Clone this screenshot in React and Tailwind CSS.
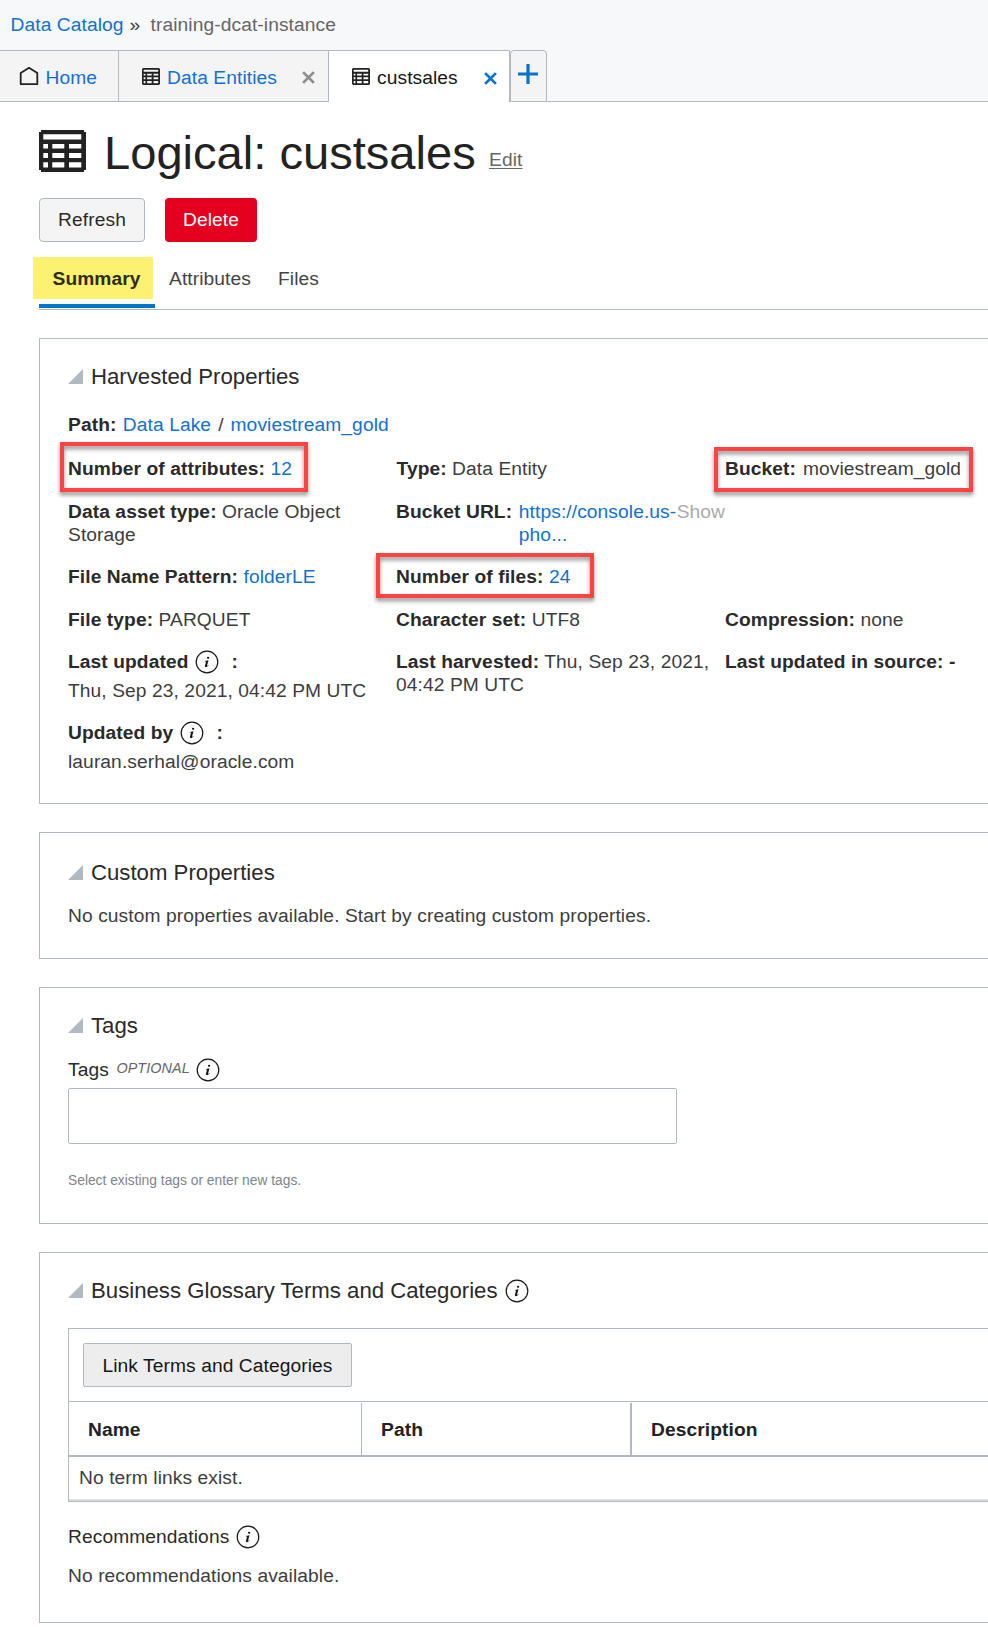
import React from "react";

function TableIcon({ className }) {
  return (
    <svg viewBox="0 0 47 42" className={className} preserveAspectRatio="none" fill="#222">
      <path
        fillRule="evenodd"
        d="M2 0H45V2H47V40H45V42H2V40H0V2H2ZM4.3 4.2V9.4H42.3V4.2ZM4.3 14V18.5H9V14ZM13.3 14V18.5H25.3V14ZM30 14V18.5H42.3V14ZM4.3 23V28H9V23ZM13.3 23V28H25.3V23ZM30 23V28H42.3V23ZM4.3 32.3V37.6H9V32.3ZM13.3 32.3V37.6H25.3V32.3ZM30 32.3V37.6H42.3V32.3Z"
      />
    </svg>
  );
}

function HomeIcon() {
  return (
    <svg viewBox="0 0 20 20" className="h-5 w-5 shrink-0" fill="none" stroke="#222" strokeWidth="1.8">
      <path d="M1.7 18.1V6.9L10 1.8L18.3 6.9V18.1Z" strokeLinejoin="round" />
    </svg>
  );
}

function CloseIcon({ className }) {
  return (
    <svg viewBox="0 0 14 14" className={className} fill="none" stroke="currentColor" strokeWidth="3">
      <path d="M1.2 1.2L12.8 12.8M12.8 1.2L1.2 12.8" />
    </svg>
  );
}

function InfoIcon({ className = "" }) {
  return (
    <svg viewBox="0 0 24 24" className={"h-6 w-6 shrink-0 " + className} fill="none">
      <circle cx="12" cy="12" r="10.8" stroke="#161616" strokeWidth="1.2" />
      <circle cx="13.1" cy="7.8" r="1.15" fill="#161616" />
      <path
        d="M9.9 10.9L13.5 10.3L12.1 15.3C11.9 16 12.2 16 13.4 14.9L13.8 15.3C12.4 16.9 11.3 17.3 10.5 17.1C9.8 16.9 9.8 16.2 10 15.5L11.1 11.5L9.8 11.4Z"
        fill="#161616"
      />
    </svg>
  );
}

function Heading({ children, info }) {
  return (
    <div className="flex h-[28px] items-center text-[22.2px] leading-[28px] tracking-normal text-[#2a2a2a]">
      <svg viewBox="0 0 15 15" className="-ml-[0.5px] mt-[-1px] mr-[8.5px] h-[15px] w-[15px] shrink-0">
        <path d="M15 0V15H0Z" fill="#b3b9c3" />
      </svg>
      {children}
      {info && <InfoIcon className="ml-[7px]" />}
    </div>
  );
}

function Label({ children }) {
  return <span className="font-bold text-[#2a2a2a]">{children}</span>;
}

function Link({ children, className = "" }) {
  return <span className={"text-[#1270d0] " + className}>{children}</span>;
}

function Callout({ className }) {
  return (
    <div
      className={
        "pointer-events-none absolute border-4 border-[#ff4343] drop-shadow-[0_3px_2px_rgba(0,0,0,0.45)] " + className
      }
    />
  );
}

function Row({ className, children }) {
  return <div className={"grid grid-cols-[328px_329px_300px] " + className}>{children}</div>;
}

function Panel({ className, children }) {
  return (
    <section className={"ml-[39px] w-[1000px] shrink-0 border border-[#b1b8c1] pl-7 " + className}>{children}</section>
  );
}

export default function App() {
  return (
    <div className="flex h-[1627px] w-[988px] flex-col overflow-hidden bg-white font-['Liberation_Sans',Arial,sans-serif] text-[19.2px] leading-[23px] tracking-[0.09px] whitespace-nowrap text-[#3d3d3d]">
      <header className="flex h-[50px] shrink-0 bg-[#f7f8fa] pt-[13px] pl-[10.5px]">
        <Link>Data Catalog</Link>
        <span className="ml-[6px] w-[21px]">»</span>
        <span className="text-[#666]">training-dcat-instance</span>
      </header>

      <nav className="flex h-[52px] shrink-0 bg-[#f7f8fa]">
        <div className="flex w-[119px] items-center border-y border-r border-[#b1b8c1] bg-[#f4f4f4] pl-[19px]">
          <HomeIcon />
          <Link className="mt-[2px] ml-[6.5px]">Home</Link>
        </div>
        <div className="flex w-[210px] items-center border-y border-r border-[#b1b8c1] bg-[#f4f4f4] pl-[23px]">
          <TableIcon className="h-[17px] w-[18px] shrink-0" />
          <Link className="mt-[2px] w-[142px] pl-[7px]">Data Entities</Link>
          <CloseIcon className="mt-[2px] h-[13px] w-[13px] text-[#8d8d8d]" />
        </div>
        <div className="flex w-[181px] items-center border-t border-r border-[#b1b8c1] bg-white pl-[22.5px]">
          <TableIcon className="h-[17px] w-[18px] shrink-0" />
          <span className="mt-px w-[114px] pl-[7.5px] text-[#161616]">custsales</span>
          <CloseIcon className="mt-[4px] h-[13px] w-[13px] text-[#0572ce]" />
        </div>
        <div className="flex w-[37px] rounded-t border border-[#b1b8c1] bg-[#f4f4f4] pt-[13px] pl-[7px]">
          <svg viewBox="0 0 20 20" className="h-5 w-5" stroke="#0572ce" strokeWidth="3.2">
            <path d="M0 10H20M10 0V20" />
          </svg>
        </div>
        <div className="flex-1 border-b border-[#b1b8c1]" />
      </nav>

      <div className="flex h-[96px] shrink-0 pl-[39px]">
        <TableIcon className="mt-[28px] h-[42px] w-[47px] shrink-0" />
        <h1 className="mt-[21px] ml-[18px] w-[385px] text-[47.1px] leading-[60px] tracking-normal text-[#222]">
          Logical: custsales
        </h1>
        <span className="mt-[46px] text-[#666] underline decoration-1 underline-offset-2">Edit</span>
      </div>

      <div className="flex h-[59px] shrink-0 gap-5 pl-[39px]">
        <button className="h-11 w-[106px] rounded border border-[#b1b8c1] bg-[#f4f4f4] pb-[2px] text-[#2a2a2a]">
          Refresh
        </button>
        <button className="h-11 w-[92px] rounded bg-[#e6001f] pb-[2px] text-white">Delete</button>
      </div>

      <div className="relative ml-[39px] flex h-[53px] shrink-0 border-b border-[#b1b8c1] pt-[10px]">
        <div className="absolute top-0 -left-[6px] h-[42px] w-[120px] bg-[#fcf171]" />
        <div className="absolute bottom-px left-0 h-1 w-[116px] bg-[#0079c8]" />
        <span className="relative w-[130px] pl-[13.5px] font-bold text-[#2d2c18]">Summary</span>
        <span className="w-[109px] text-[#444]">Attributes</span>
        <span className="text-[#444]">Files</span>
      </div>

      <Panel className="relative mt-7 h-[466px] pt-[24px]">
        <Heading>Harvested Properties</Heading>
        <div className="mt-[22px] h-[44px]">
          <Label>Path:</Label> <Link className="ml-px">Data Lake</Link>
          <span className="mx-[7px]">/</span>
          <Link>moviestream_gold</Link>
        </div>
        <Row className="h-[43px]">
          <div>
            <Label>Number of attributes:</Label> <Link>12</Link>
          </div>
          <div className="pl-[0.5px]">
            <Label>Type:</Label> Data Entity
          </div>
          <div>
            <Label>Bucket:</Label> <span className="ml-[1.5px]">moviestream_gold</span>
          </div>
        </Row>
        <Row className="h-[65px]">
          <div>
            <Label>Data asset type:</Label> Oracle Object
            <br />
            Storage
          </div>
          <div className="flex">
            <div className="w-[123px]">
              <Label>Bucket URL:</Label>
            </div>
            <Link className="w-[158px]">
              https://console.us-
              <br />
              pho...
            </Link>
            <span className="text-[#aaa]">Show</span>
          </div>
        </Row>
        <Row className="h-[43px]">
          <div>
            <Label>File Name Pattern:</Label> <Link>folderLE</Link>
          </div>
          <div>
            <Label>Number of files:</Label> <Link>24</Link>
          </div>
        </Row>
        <Row className="h-[42px]">
          <div>
            <Label>File type:</Label> PARQUET
          </div>
          <div>
            <Label>Character set:</Label> UTF8
          </div>
          <div>
            <Label>Compression:</Label> none
          </div>
        </Row>
        <Row className="h-[71px]">
          <div>
            <div className="flex h-[29px]">
              <Label>Last updated</Label>
              <InfoIcon className="ml-[7px]" />
              <span className="ml-[12px] font-bold text-[#2a2a2a]">:</span>
            </div>
            <div>Thu, Sep 23, 2021, 04:42 PM UTC</div>
          </div>
          <div>
            <Label>Last harvested:</Label> Thu, Sep 23, 2021,
            <br />
            04:42 PM UTC
          </div>
          <div>
            <Label>Last updated in source:</Label> <Label>-</Label>
          </div>
        </Row>
        <div className="flex h-[29px]">
          <Label>Updated by</Label>
          <InfoIcon className="ml-[7px]" />
          <span className="ml-[12px] font-bold text-[#2a2a2a]">:</span>
        </div>
        <div>lauran.serhal@oracle.com</div>
        <Callout className="top-[103px] left-[20px] h-[50px] w-[248px]" />
        <Callout className="top-[214px] left-[336px] h-[45px] w-[218px]" />
        <Callout className="top-[108px] left-[674px] h-[45px] w-[259px]" />
      </Panel>

      <Panel className="mt-7 h-[127px] pt-[26px]">
        <Heading>Custom Properties</Heading>
        <div className="mt-[17px]">No custom properties available. Start by creating custom properties.</div>
      </Panel>

      <Panel className="mt-7 h-[237px] pt-[24px]">
        <Heading>Tags</Heading>
        <div className="mt-[18px] flex h-[30px] text-[#2a2a2a]">
          Tags
          <span className="-mt-px ml-[7.5px] text-[14.4px] text-[#666] italic">OPTIONAL</span>
          <InfoIcon className="ml-[6px]" />
        </div>
        <div className="h-14 w-[609px] rounded-[2px] border border-[#b1b8c1]" />
        <div className="mt-[25px] text-[13.8px] tracking-normal text-[#7d858c]">
          Select existing tags or enter new tags.
        </div>
      </Panel>

      <Panel className="mt-7 h-[371px] pt-[24px]">
        <Heading info>Business Glossary Terms and Categories</Heading>
        <div className="mt-[23px] h-[174px] border border-[#b1b8c1]">
          <div className="h-[73px] border-b border-[#b1b8c1] pt-[14px] pl-[14px]">
            <button className="h-11 w-[269px] rounded-[2px] border border-[#b1b8c1] bg-[#ededed] text-[#161616]">
              Link Terms and Categories
            </button>
          </div>
          <div className="flex h-[55px] border-b-2 border-[#b1b8c1] pt-px font-bold text-[#222]">
            <div className="w-[293px] border-r border-[#b1b8c1] pt-[15px] pl-[19px]">Name</div>
            <div className="w-[270px] border-r-2 border-[#b1b8c1] pt-[15px] pl-[19px]">Path</div>
            <div className="pt-[15px] pl-[19px]">Description</div>
          </div>
          <div className="h-[44px] border-b-2 border-[#ddd] pt-[9px] pl-[10px]">No term links exist.</div>
        </div>
        <div className="mt-[23px] flex text-[#2a2a2a]">
          Recommendations
          <InfoIcon className="ml-[7px]" />
        </div>
        <div className="mt-[15px]">No recommendations available.</div>
      </Panel>
    </div>
  );
}
